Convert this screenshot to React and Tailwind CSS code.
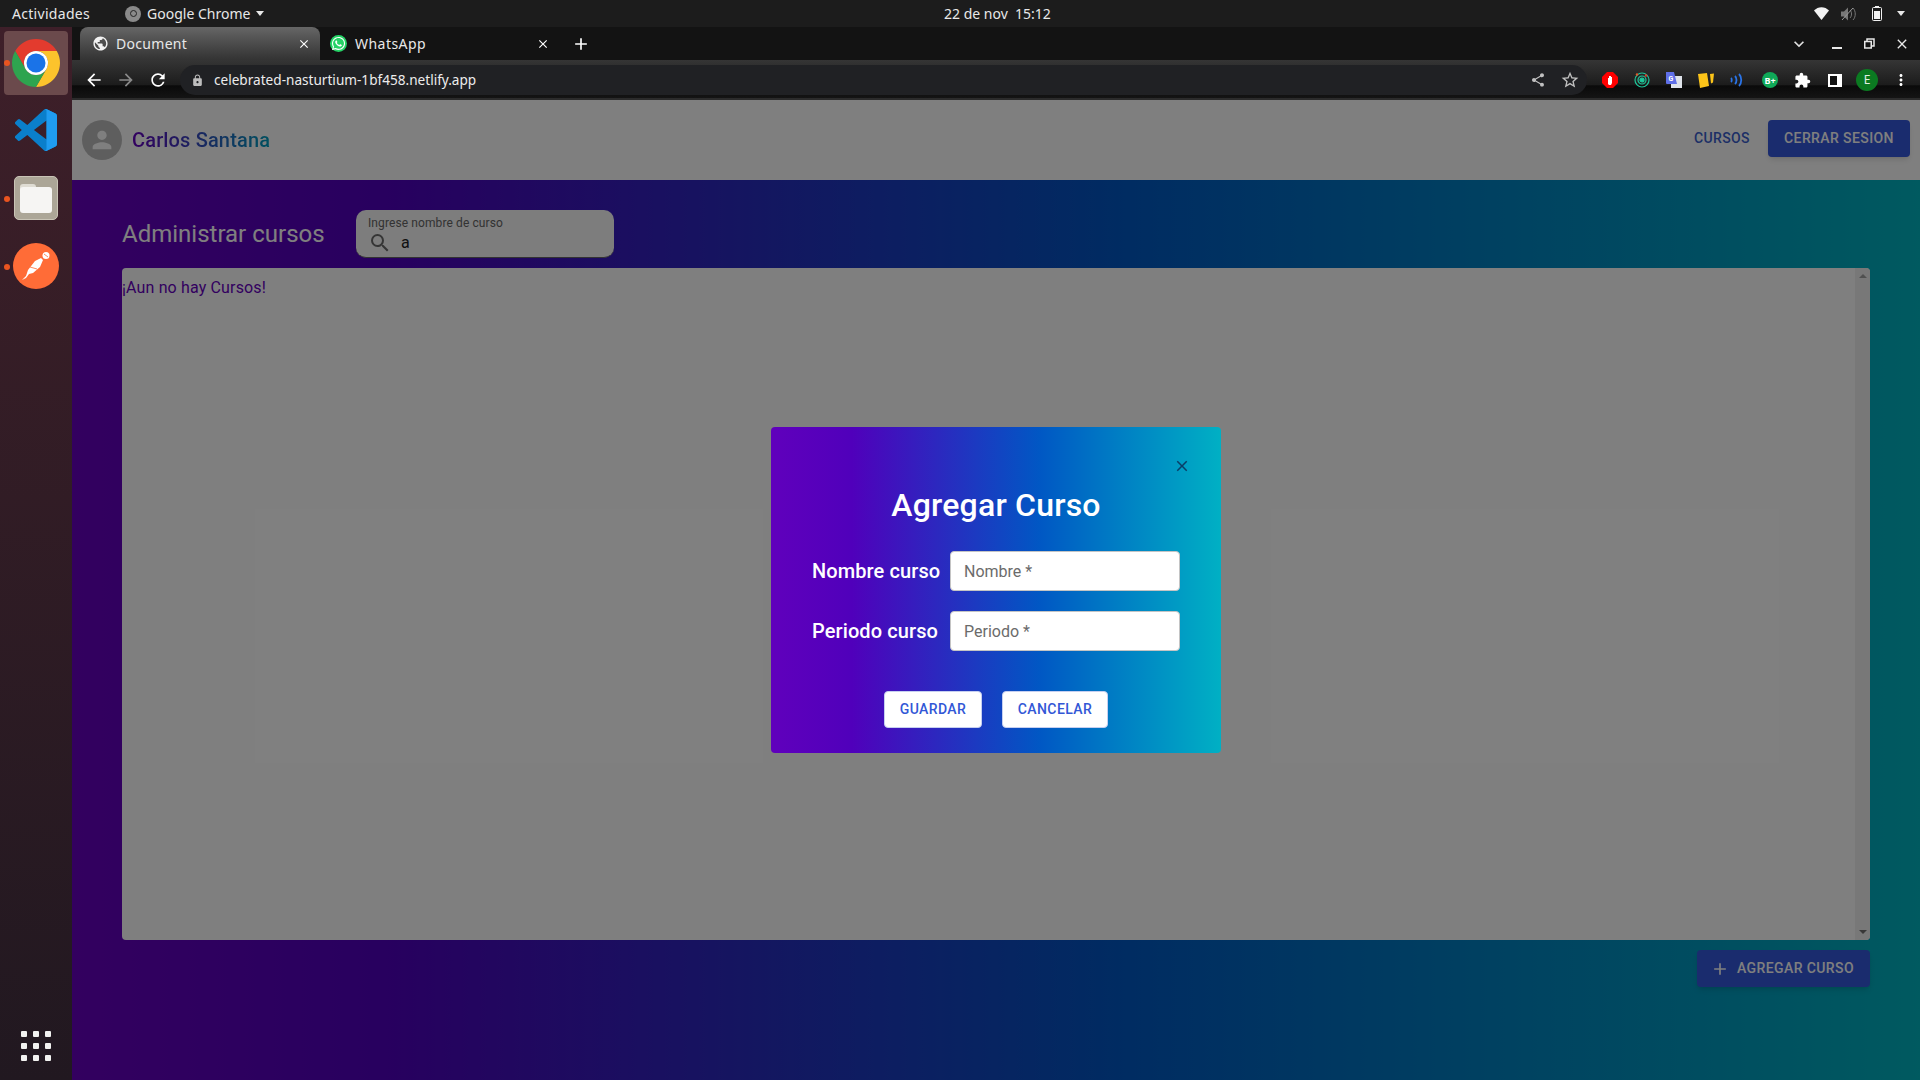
import React from "react";
import { FaWhatsapp } from "react-icons/fa";
import { MdStarBorder, MdSearch, MdAdd, MdClose, MdArrowBack, MdArrowForward, MdRefresh, MdLock, MdPerson, MdShare, MdExpandMore, MdMoreVert, MdPublic, MdExtension } from "react-icons/md";

const UI = "font-['Noto_Sans',sans-serif]";
const RB = "font-['Roboto',sans-serif]";

function ChromeLogo({ size = 48 }) {
  return (
    <svg width={size} height={size} viewBox="0 0 48 48">
      <path d="M44.78 12A24 24 0 0 0 3.22 12L13.6 30A12 12 0 0 1 24 12Z" fill="#e33b2e" />
      <path d="M24 48A24 24 0 0 0 44.78 12H24A12 12 0 0 1 34.4 30Z" fill="#fcc32c" />
      <path d="M3.22 12A24 24 0 0 0 24 48L34.4 30A12 12 0 0 1 13.6 30Z" fill="#2ea44f" />
      <circle cx="24" cy="24" r="12" fill="#fff" />
      <circle cx="24" cy="24" r="9.500" fill="#1a73e8" />
    </svg>
  );
}

function VSCode() {
  return (
    <svg width="42" height="42" viewBox="0 0 100 100">
      <path d="M96.46 10.8 75.86.87a6.2 6.2 0 0 0-7.08 1.2L29.35 38.04 12.17 25a4.2 4.2 0 0 0-5.36.24l-5.5 5a4.2 4.2 0 0 0 0 6.2L16.21 50 1.3 63.6a4.2 4.2 0 0 0 0 6.2l5.5 5a4.2 4.2 0 0 0 5.37.24l17.18-13.04 39.43 35.97a6.2 6.2 0 0 0 7.08 1.2l20.6-9.92A6.25 6.25 0 0 0 100 83.63V16.4a6.25 6.25 0 0 0-3.54-5.6ZM75.01 72.7 45.1 50l29.91-22.7z" fill="#0a7fcb" />
      <path d="M75.86.87 96.46 10.8A6.25 6.25 0 0 1 100 16.4v67.2a6.25 6.25 0 0 1-3.54 5.6l-20.6 9.92a6.2 6.2 0 0 1-7.08-1.2 3.64 3.64 0 0 0 6.23-2.57V3.64A3.64 3.64 0 0 0 68.78 2.07a6.2 6.2 0 0 1 7.08-1.2z" fill="#1f9cf0" />
    </svg>
  );
}

function Postman() {
  return (
    <svg width="46" height="46" viewBox="0 0 46 46">
      <circle cx="23" cy="23" r="23" fill="#ff6c37" />
      <path d="M9 37l4-2 3-4 4-1 7-6 3-7-2-2-6 3-7 9-2 6-4 4z" fill="#fff" />
      <circle cx="33" cy="12.500" r="3.500" fill="#fff" />
      <path d="M31 11l4 3M17 24l7 2" stroke="#ff6c37" strokeWidth="0.800" />
    </svg>
  );
}

function FilesIcon() {
  return (
    <div className="w-[44px] h-[44px] rounded-[5px] bg-[#aca697] border border-[#c9c4b6] flex items-center justify-center">
      <div className="relative w-[32px] h-[29px]">
        <div className="absolute left-0 top-0 w-[16px] h-[8px] rounded-t-[3px] bg-[#dfdcd3]" />
        <div className="absolute left-0 top-[3px] w-[32px] h-[26px] rounded-[3px] bg-[#f6f5f3]" />
      </div>
    </div>
  );
}

function Dock() {
  return (
    <div className="w-[72px] shrink-0 bg-gradient-to-b from-[#3e1f29] to-[#211820] flex flex-col items-center relative">
      <div className="w-[64px] h-[64px] mt-[4px] rounded-[4px] bg-[#6b4a4c] flex items-center justify-center">
        <ChromeLogo />
      </div>
      <div className="h-[68px] mt-[1px] flex items-center justify-center"><VSCode /></div>
      <div className="h-[68px] flex items-center justify-center"><FilesIcon /></div>
      <div className="h-[68px] flex items-center justify-center"><Postman /></div>
      <div className="absolute left-[4px] top-[33px] w-[6px] h-[6px] rounded-full bg-[#e95420]" />
      <div className="absolute left-[4px] top-[169px] w-[6px] h-[6px] rounded-full bg-[#e95420]" />
      <div className="absolute left-[4px] top-[237px] w-[6px] h-[6px] rounded-full bg-[#e95420]" />
      <div className="mt-auto mb-[19px] grid grid-cols-3 gap-[6px]">
        {Array.from({ length: 9 }).map((_, i) => (
          <div key={i} className="w-[6px] h-[6px] rounded-[1px] bg-[#f2f2f0]" />
        ))}
      </div>
    </div>
  );
}

function TopBar() {
  return (
    <div className={`h-[27px] shrink-0 bg-[#1c1c1c] flex items-center text-[#e8e8e8] text-[14px] relative ${UI}`}>
      <span className="ml-[12px] tracking-[0.3px]">Actividades</span>
      <div className="ml-[35px] flex items-center gap-[6px]">
        <div className="w-[16px] h-[16px] rounded-full bg-[#8a8a8a] flex items-center justify-center">
          <div className="w-[7px] h-[7px] rounded-full border-[1.500px] border-[#222]" />
        </div>
        <span>Google Chrome</span>
        <div className="w-0 h-0 border-x-[4.500px] border-x-transparent border-t-[5px] border-t-[#e8e8e8]" />
      </div>
      <span className="absolute left-[944px] top-[3px] w-[104px] text-center text-[14px] whitespace-nowrap">22 de nov&nbsp; 15:12</span>
      <div className="ml-auto mr-[15px] flex items-center">
        <svg width="15" height="13" viewBox="0 0 15 13"><path d="M0 3.500C4 -1 11 -1 15 3.500L7.500 13z" fill="#f2f2f2" /></svg>
        <svg className="ml-[12px]" width="16" height="14" viewBox="0 0 16 14" fill="#777"><path d="M0 4.500h3l4-4v13l-4-4H0z" /><path d="M9 3c2 2 2 6 0 8M12 1c3 3 3 9 0 12" stroke="#777" fill="none" /><path d="M1 13 12 1" stroke="#999" /></svg>
        <svg className="ml-[15px]" width="10" height="15" viewBox="0 0 10 15"><rect x="0.500" y="1.500" width="9" height="13" rx="1" fill="none" stroke="#f2f2f2" /><rect x="3" y="0" width="4" height="2" fill="#f2f2f2" /><rect x="2" y="5" width="6" height="8" fill="#f2f2f2" /></svg>
        <div className="ml-[15px] w-0 h-0 border-x-[4.500px] border-x-transparent border-t-[5px] border-t-[#e8e8e8]" />
      </div>
    </div>
  );
}

function TabBar() {
  return (
    <div className={`h-[33px] shrink-0 bg-[#131313] flex items-stretch text-[14px] ${UI}`}>
      <div className="ml-[8px] w-[240px] rounded-t-[8px] bg-gradient-to-b from-[#666666] to-[#333333] flex items-center pl-[12px] pr-[9px] text-[#e8e8e8]">
        <MdPublic className="text-[#f2f2f2] w-[17px] h-[17px]" />
        <span className="ml-[7px] tracking-[0.3px]">Document</span>
        <MdClose className="ml-auto text-white w-[14px] h-[14px]" />
      </div>
      <div className="w-[240px] flex items-center pl-[10px] pr-[10px] text-[#e8e8e8]">
        <div className="w-[17px] h-[17px] rounded-full bg-[#25d366] flex items-center justify-center">
          <FaWhatsapp className="text-white w-[15px] h-[15px]" />
        </div>
        <span className="ml-[8px] tracking-[0.45px]">WhatsApp</span>
        <MdClose className="ml-auto text-white w-[14px] h-[14px]" />
      </div>
      <div className="ml-[11px] flex items-center"><MdAdd className="text-white w-[20px] h-[20px]" /></div>
      <div className="ml-auto mr-[10px] flex items-center">
        <MdExpandMore className="text-[#e0e0e0] w-[20px] h-[20px]" />
        <div className="ml-[23px] w-[10px] h-[2px] mt-[8px] bg-[#e8e8e8]" />
        <svg className="ml-[22px]" width="11" height="11" viewBox="0 0 11 11" fill="none" stroke="#e8e8e8" strokeWidth="1.500"><rect x="0.750" y="3.500" width="6.500" height="6.500" /><path d="M3 3V1h7v7H8" /></svg>
        <MdClose className="ml-[19px] text-[#e8e8e8] w-[16px] h-[16px]" />
      </div>
    </div>
  );
}

function Toolbar() {
  return (
    <div className={`h-[40px] shrink-0 pt-[2px] bg-[linear-gradient(180deg,#353535_0%,#1c1c1c_65%,#0a0a0a_68%,#141414_100%)] border-b-[2px] border-b-[#2b2b2b] flex items-center ${UI}`}>
      <MdArrowBack className="ml-[12px] text-white w-[20px] h-[20px]" />
      <MdArrowForward className="ml-[12px] text-[#8a8a8a] w-[20px] h-[20px]" />
      <MdRefresh className="ml-[12px] text-white w-[20px] h-[20px]" />
      <div className="ml-[12px] w-[1407px] h-[30px] rounded-full bg-[#202124] flex items-center">
        <MdLock className="ml-[11px] text-[#bdbdbd] w-[13px] h-[13px]" />
        <span className="ml-[10px] text-[13.600px] text-[#ececec]">celebrated-nasturtium-1bf458.netlify.app</span>
        <MdShare className="ml-auto text-[#c0c0c0] w-[16px] h-[16px]" />
        <MdStarBorder className="ml-[14px] mr-[7px] text-[#c0c0c0] w-[20px] h-[20px]" />
      </div>
      <div className="flex items-center">
        <svg className="ml-[15px]" width="16" height="16" viewBox="0 0 16 16"><path d="M5 0h6l5 5v6l-5 5H5l-5-5V5z" fill="#f00" /><path d="M6 12V6h1v3-5h1v5-5h1v5-4h1v6l-1 2H7z" fill="#fff" /></svg>
        <svg className="ml-[16px]" width="16" height="16" viewBox="0 0 16 16" fill="none" stroke="#1ec79a" strokeWidth="1.200"><circle cx="8" cy="8" r="7" /><circle cx="8" cy="8" r="4" /><circle cx="8" cy="8" r="2" fill="#1ec79a" /><circle cx="3" cy="2.500" r="1.200" fill="#e0592a" stroke="none" /><circle cx="12" cy="3.500" r="1.200" fill="#e0392a" stroke="none" /></svg>
        <svg className="ml-[16px]" width="16" height="16" viewBox="0 0 16 16"><rect x="5" y="4" width="11" height="12" fill="#dfe3ea" /><path d="M0 0h8l3 12H1a1 1 0 0 1-1-1z" fill="#5f6fe8" /><text x="2.500" y="9" fontSize="7" fontWeight="700" fill="#fff" fontFamily="Roboto, sans-serif">G</text></svg>
        <svg className="ml-[16px]" width="16" height="16" viewBox="0 0 16 16"><path d="M0 2l9-1 2 13-9 2z" fill="#fcc419" /><path d="M12 2l4-.500-1 9-2 1z" fill="#fcc419" /></svg>
        <svg className="ml-[16px]" width="14" height="14" viewBox="0 0 14 14" fill="none" stroke="#2a74e8" strokeWidth="1.800"><path d="M1 5c1 1 1 3 0 4M5 3c2 2 2 6 0 8M9 1c3 3 3 9 0 12" /></svg>
        <div className="ml-[18px] w-[16px] h-[16px] rounded-full bg-[#0fa958] text-white text-[9px] leading-none font-bold flex items-center justify-center">B+</div>
        <MdExtension className="ml-[16px] text-white w-[17px] h-[17px]" />
        <svg className="ml-[17px]" width="14" height="13" viewBox="0 0 14 13"><rect width="14" height="13" fill="#fff" /><rect x="2" y="2" width="7" height="9" fill="#111" /></svg>
        <div className="ml-[14px] w-[22px] h-[22px] rounded-full bg-[#0b7a21] text-[#e2efe2] text-[12px] flex items-center justify-center">E</div>
        <MdMoreVert className="ml-[14px] text-white w-[18px] h-[18px]" />
      </div>
    </div>
  );
}

function Modal() {
  return (
    <div className={`absolute left-[699px] top-[327px] w-[450px] h-[326px] rounded-[4px] bg-[linear-gradient(90deg,#6000bc_0%,#5000bb_18%,#0058c4_60%,#00b0c4_100%)] pt-[56px] ${RB}`}>
      <MdClose className="absolute right-[30px] top-[30px] w-[18px] h-[18px] text-[#0a3d66]" />
      <div className="text-center text-white text-[32px] leading-[44px] font-medium tracking-[0.2px]">Agregar Curso</div>
      <div className="mt-[24px] ml-[41px] flex flex-col gap-[20px]">
        {[
          ["Nombre curso", "Nombre *"],
          ["Periodo curso", "Periodo *"],
        ].map(([label, ph]) => (
          <div key={label} className="flex items-center h-[40px]">
            <div className="w-[138px] text-white text-[20px] font-medium tracking-[0.1px] whitespace-nowrap">{label}</div>
            <div className="w-[230px] h-[40px] rounded-[4px] bg-white border border-[#c4c4c4] flex items-center pl-[13px] pt-[1px] text-[16px] text-[#6b6b6b]">{ph}</div>
          </div>
        ))}
      </div>
      <div className="mt-[40px] ml-[113px] flex gap-[20px] text-[14px] font-medium tracking-[0.4px] text-[#3257d6]">
        <div className="w-[98px] h-[37px] rounded-[4px] bg-white border border-[#c6cff0] flex items-center justify-center">GUARDAR</div>
        <div className="w-[106px] h-[37px] rounded-[4px] bg-white border border-[#c6cff0] flex items-center justify-center">CANCELAR</div>
      </div>
    </div>
  );
}

function Page() {
  return (
    <div className={`flex-1 relative flex flex-col bg-[linear-gradient(90deg,#6600bf_0%,#5000be_17%,#0058c4_57%,#00b4c0_100%)] ${RB}`}>
      <div className="h-[80px] shrink-0 bg-white flex items-center pl-[10px] pr-[10px]">
        <div className="w-[40px] h-[40px] rounded-full bg-[#bdbdbd] flex items-center justify-center">
          <MdPerson className="w-[28px] h-[28px] text-white" />
        </div>
        <span className="ml-[10px] text-[20px] font-medium tracking-[0.15px] bg-[linear-gradient(90deg,#6600bf,#00a0c0)] bg-clip-text text-transparent">Carlos Santana</span>
        <span className="ml-auto mb-[3px] text-[14px] font-medium tracking-[0.4px] text-[#3a5fcd]">CURSOS</span>
        <div className="ml-[18px] mb-[3px] w-[142px] h-[37px] rounded-[4px] bg-[#3458dc] text-white text-[14px] font-medium tracking-[0.4px] flex items-center justify-center shadow-md">CERRAR SESION</div>
      </div>
      <div className="pl-[50px] pr-[50px] flex-1 flex flex-col">
        <div className="mt-[30px] flex items-center h-[48px]">
          <span className="text-[24px] text-white w-[234px]">Administrar cursos</span>
          <div className="w-[258px] h-[48px] rounded-[10px] bg-[#fafafa] border-b border-b-[#666] pl-[12px] pt-[6px]">
            <div className="text-[12px] leading-[14px] tracking-[0.1px] text-[#666]">Ingrese nombre de curso</div>
            <div className="flex items-center mt-[1px]">
              <MdSearch className="w-[24px] h-[24px] text-[#6b6b6b]" />
              <span className="ml-[9px] text-[16px] text-[#222]">a</span>
            </div>
          </div>
        </div>
        <div className="mt-[10px] h-[672px] rounded-[4px] bg-white flex overflow-hidden">
          <div className="flex-1 text-[16px] leading-[40px] tracking-[0.15px] text-[#6600bf]">¡Aun no hay Cursos!</div>
          <div className="w-[15px] bg-[#f1f1f1] flex flex-col items-center justify-between py-[6px]">
            <div className="w-0 h-0 border-x-[4px] border-x-transparent border-b-[4px] border-b-[#a0a0a0]" />
            <div className="w-0 h-0 border-x-[4px] border-x-transparent border-t-[4px] border-t-[#707070]" />
          </div>
        </div>
        <div className="mt-[10px] flex justify-end">
          <div className="w-[173px] h-[37px] rounded-[4px] bg-[#3458dc] text-white text-[14px] font-medium tracking-[0.4px] flex items-center pl-[13px] shadow-md">
            <MdAdd className="w-[20px] h-[20px]" />
            <span className="ml-[7px]">AGREGAR CURSO</span>
          </div>
        </div>
      </div>
      <div className="absolute inset-0 bg-black/50" />
      <Modal />
    </div>
  );
}

export default function App() {
  return (
    <div className="w-[1920px] h-[1080px] overflow-hidden flex flex-col bg-black">
      <TopBar />
      <div className="flex-1 flex min-h-0">
        <Dock />
        <div className="flex-1 flex flex-col min-w-0">
          <TabBar />
          <Toolbar />
          <Page />
        </div>
      </div>
    </div>
  );
}
